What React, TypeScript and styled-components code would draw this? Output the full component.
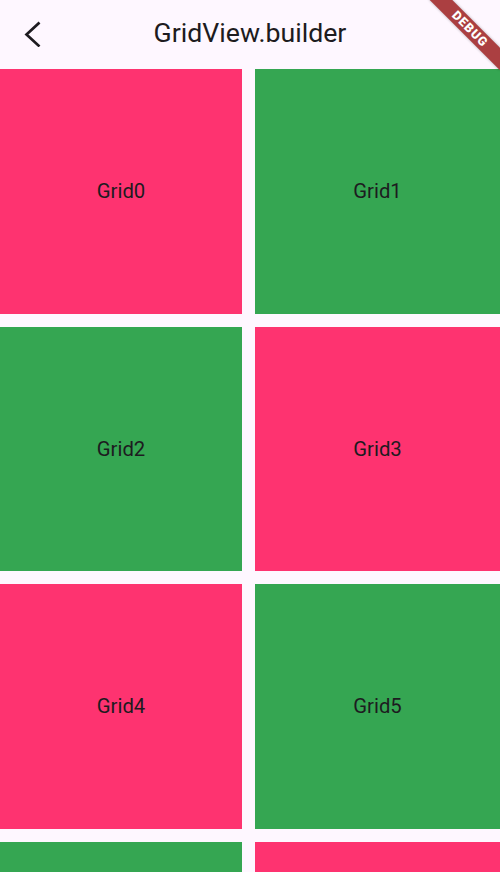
import React from "react";
import styled, { createGlobalStyle } from "styled-components";

const Global = createGlobalStyle`
  html, body { margin: 0; padding: 0; background: #fef7ff; }
  body { font-family: Roboto, "Noto Sans", sans-serif; }
`;

const Page = styled.div`
  position: relative;
  width: 500px;
  height: 872px;
  overflow: hidden;
  background: #fef7ff;
`;

const AppBar = styled.header`
  height: 69px;
  display: grid;
  grid-template-columns: 1fr auto 1fr;
  align-items: center;
  background: #fef7ff;
`;

const BackButton = styled.button`
  justify-self: start;
  margin-left: 19px;
  width: 28px;
  height: 28px;
  padding: 0;
  border: none;
  background: transparent;
  display: flex;
  align-items: center;
  justify-content: center;
  margin-top: -4px;
`;

const Title = styled.h1`
  margin: 0;
  margin-top: -4px;
  font-family: Roboto, sans-serif;
  font-weight: 400;
  font-size: 26.7px;
  color: #1d1b20;
  letter-spacing: 0;
`;

const Grid = styled.div`
  display: grid;
  grid-template-columns: 242px 245px;
  grid-auto-rows: 244.5px;
  column-gap: 13px;
  row-gap: 13px;
`;

const Cell = styled.div<{ $pink: boolean }>`
  background: ${(p) => (p.$pink ? "#fe3370" : "#35a652")};
  display: flex;
  align-items: center;
  justify-content: center;
  font-family: Roboto, sans-serif;
  font-size: 20.3px;
  color: #1d1b20;
`;

const Banner = styled.div`
  position: absolute;
  top: 21px;
  right: -20px;
  width: 100px;
  height: 16px;
  transform: rotate(45deg);
  background: #ab3f41;
  box-shadow: 0 0 3px rgba(0, 0, 0, 0.3);
  color: #fff;
  font-family: Roboto, "DejaVu Sans", sans-serif;
  font-weight: 900;
  font-size: 12.5px;
  line-height: 16px;
  text-align: center;
  letter-spacing: 1px;
`;

export default function App() {
  const items = Array.from({ length: 8 }, (_, i) => i);
  return (
    <Page>
      <Global />
      <AppBar>
        <BackButton aria-label="Back">
          <svg width="28" height="28" viewBox="0 0 28 28">
            <polyline
              points="19.5,4.5 7.5,15.5 19.5,26.5"
              fill="none"
              stroke="#1d1b20"
              strokeWidth="2.7"
              strokeLinecap="square"
              strokeLinejoin="miter"
            />
          </svg>
        </BackButton>
        <Title>GridView.builder</Title>
        <span />
      </AppBar>
      <Grid>
        {items.map((i) => {
          const row = Math.floor(i / 2);
          const col = i % 2;
          return (
            <Cell key={i} $pink={(row + col) % 2 === 0}>
              Grid{i}
            </Cell>
          );
        })}
      </Grid>
      <Banner>DEBUG</Banner>
    </Page>
  );
}
